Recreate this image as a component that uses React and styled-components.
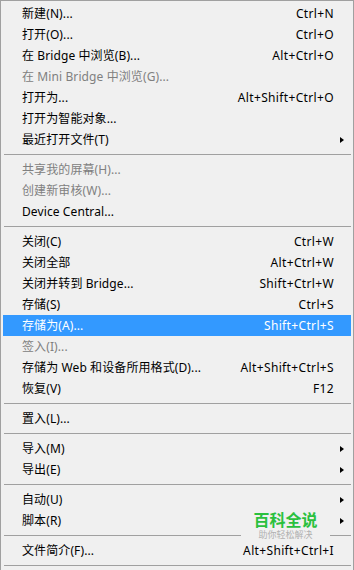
import React from 'react';
import styled, { createGlobalStyle } from 'styled-components';

const GlobalStyle = createGlobalStyle`
  html, body {
    margin: 0;
    padding: 0;
    background: #f0f0f0;
  }
`;

const sections = [
  [
    { label: '新建(N)...', keys: 'Ctrl+N' },
    { label: '打开(O)...', keys: 'Ctrl+O' },
    { label: '在 Bridge 中浏览(B)...', keys: 'Alt+Ctrl+O' },
    { label: '在 Mini Bridge 中浏览(G)...', disabled: true },
    { label: '打开为...', keys: 'Alt+Shift+Ctrl+O' },
    { label: '打开为智能对象...' },
    { label: '最近打开文件(T)', sub: true },
  ],
  [
    { label: '共享我的屏幕(H)...', disabled: true },
    { label: '创建新审核(W)...', disabled: true },
    { label: 'Device Central...' },
  ],
  [
    { label: '关闭(C)', keys: 'Ctrl+W' },
    { label: '关闭全部', keys: 'Alt+Ctrl+W' },
    { label: '关闭并转到 Bridge...', keys: 'Shift+Ctrl+W' },
    { label: '存储(S)', keys: 'Ctrl+S' },
    { label: '存储为(A)...', keys: 'Shift+Ctrl+S', active: true },
    { label: '签入(I)...', disabled: true },
    { label: '存储为 Web 和设备所用格式(D)...', keys: 'Alt+Shift+Ctrl+S' },
    { label: '恢复(V)', keys: 'F12' },
  ],
  [{ label: '置入(L)...' }],
  [
    { label: '导入(M)', sub: true },
    { label: '导出(E)', sub: true },
  ],
  [
    { label: '自动(U)', sub: true },
    { label: '脚本(R)', sub: true },
  ],
  [{ label: '文件简介(F)...', keys: 'Alt+Shift+Ctrl+I' }],
];

const FileMenu = () => (
  <>
    <GlobalStyle />
    <Menu>
      {sections.map((items, i) => (
        <React.Fragment key={i}>
          {i > 0 && <Separator />}
          {items.map((item) => (
            <Item key={item.label} $active={item.active} $disabled={item.disabled}>
              <Label>{item.label}</Label>
              <Keys>{item.keys}</Keys>
              <Arrow>{item.sub && <Caret />}</Arrow>
            </Item>
          ))}
        </React.Fragment>
      ))}
      <Separator />
      <Watermark>
        <Brand>百科全说</Brand>
        <Slogan>助你轻松解决</Slogan>
      </Watermark>
    </Menu>
  </>
);

export default FileMenu;

const Menu = styled.div`
  position: relative;
  box-sizing: border-box;
  width: 354px;
  height: 570px;
  overflow: hidden;
  padding: 2px 2px 0;
  border-top: 1px solid #a0a0a0;
  border-left: 1px solid #a0a0a0;
  border-right: 1px solid #a0a0a0;
  background: #f0f0f0;
  font-family: "Noto Sans", "Noto Sans CJK SC", sans-serif;
  font-size: 12px;
`;

const Item = styled.div`
  display: grid;
  grid-template-columns: 1fr auto 17px;
  align-items: center;
  height: 21px;
  padding-left: 19px;
  color: ${(p) => (p.$active ? '#ffffff' : p.$disabled ? '#808080' : '#000000')};
  background: ${(p) => (p.$active ? '#3399ff' : 'transparent')};
  white-space: nowrap;
`;

const Label = styled.span`
  line-height: 21px;
  letter-spacing: 0.1px;
`;

const Keys = styled.span`
  line-height: 21px;
  text-align: right;
  letter-spacing: 0.35px;
`;

const Arrow = styled.span`
  display: flex;
  align-items: center;
  padding-left: 6px;
`;

const Caret = styled.span`
  width: 0;
  height: 0;
  border-top: 3.5px solid transparent;
  border-bottom: 3.5px solid transparent;
  border-left: 4px solid #000;
`;

const Separator = styled.div`
  height: 9px;
  display: flex;
  align-items: center;
  &::after {
    content: '';
    flex: 1;
    height: 1px;
    margin-left: 1px;
    background: #a0a0a0;
  }
`;

const Watermark = styled.div`
  position: absolute;
  left: 240px;
  top: 508px;
  width: 89px;
  display: flex;
  flex-direction: column;
  align-items: center;
`;

const Brand = styled.span`
  color: #2ac03e;
  font-family: "Noto Sans CJK SC", sans-serif;
  font-weight: 700;
  font-size: 16px;
  line-height: 20px;
`;

const Slogan = styled.span`
  width: 100%;
  text-align: center;
  background: #f0f0f0;
  color: #b0b0b0;
  font-family: "Noto Sans CJK SC", sans-serif;
  font-size: 9px;
  line-height: 12px;
`;
